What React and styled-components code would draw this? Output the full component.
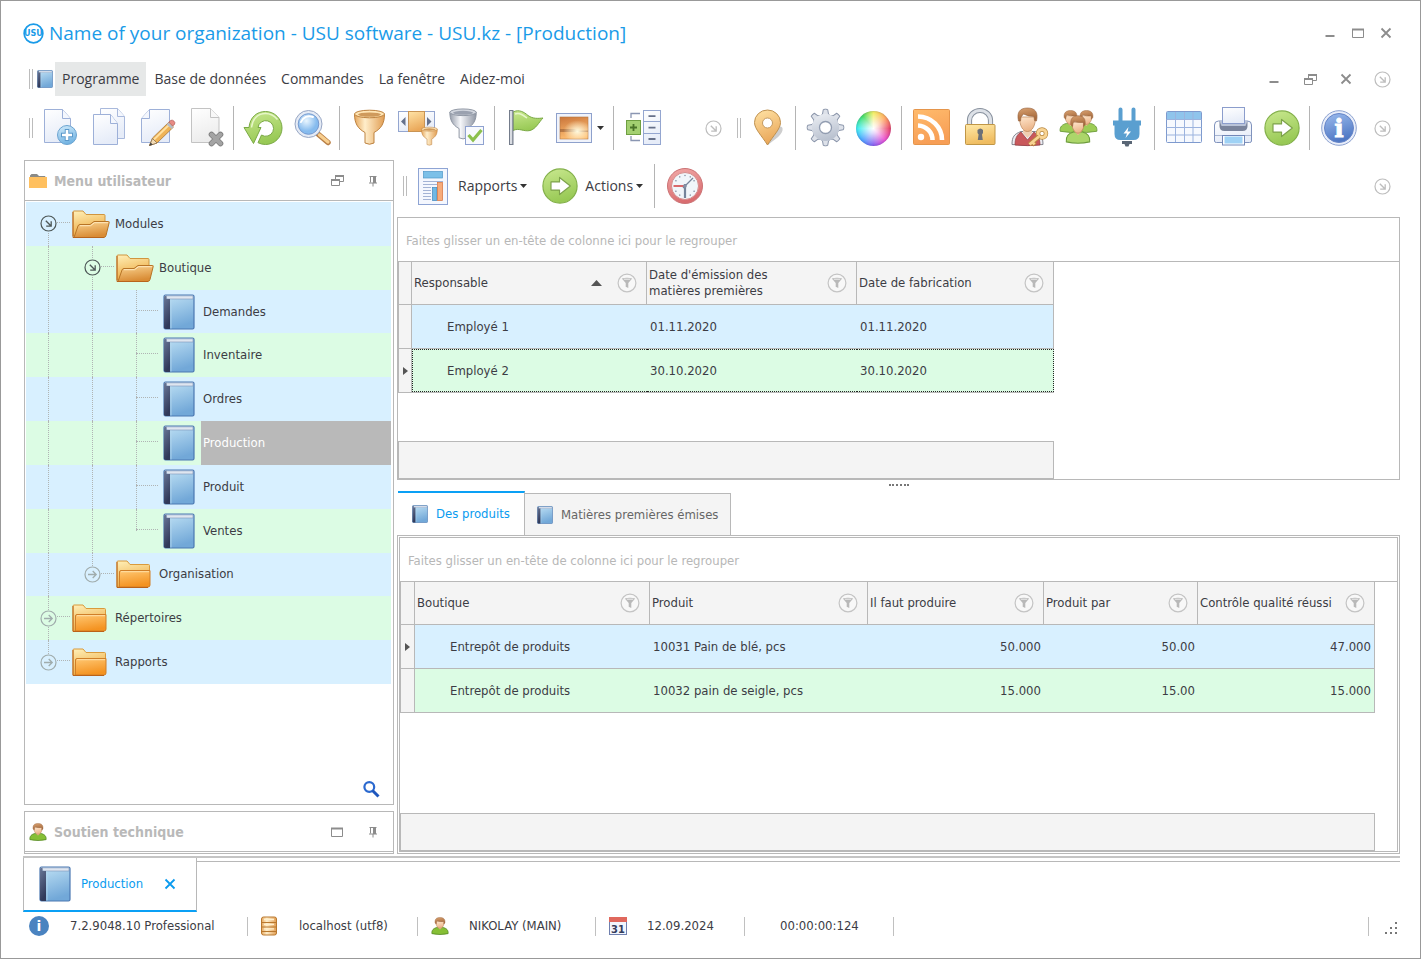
import React from "react";
import styled, { createGlobalStyle, css } from "styled-components";

const GlobalStyle = createGlobalStyle`
  * {
    box-sizing: border-box;
  }
  body {
    margin: 0;
    background: #fff;
    color: #3c3c44;
    font-family: "DejaVu Sans Condensed", "DejaVu Sans", sans-serif;
    font-size: 13px;
    line-height: 16px;
  }
  button {
    margin: 0;
    padding: 0;
    border: 0;
    background: none;
    color: inherit;
    font: inherit;
    cursor: pointer;
  }
  svg {
    display: block;
    flex-shrink: 0;
    overflow: visible;
  }
`;

const line = "#b8b8b8";
const blueRow = "#d8f0ff";
const greenRow = "#dcfce4";

/* ---------- window ---------- */

const Window = styled.div`
  display: flex;
  flex-direction: column;
  min-height: 100vh;
  padding: 13px 20px 18px 22px;
  border: 1px solid #999;
`;

const TitleBar = styled.header`
  display: flex;
  align-items: center;
  height: 38px;
  color: #1a9be8;
  h1 {
    flex: 1;
    margin: 0 0 0 5px;
    font-family: "Open Sans", "Noto Sans", sans-serif;
    font-size: 19px;
    font-weight: 400;
    line-height: 24px;
  }
`;

const WindowButton = styled.button`
  display: flex;
  align-items: center;
  justify-content: center;
  flex-shrink: 0;
  width: ${(props) => (props.$narrow ? "28px" : "36px")};
  height: 28px;
  color: #8c8c8c;
`;

const Overflow = styled(WindowButton)`
  color: #bdbdbd;
`;

const MenuBar = styled.nav`
  display: flex;
  align-items: center;
  height: 34px;
  margin-top: 10px;
  padding-left: 6px;
  font-family: "Open Sans", "Noto Sans", sans-serif;
  font-size: 14px;
  .book {
    margin: 0 2px 0 4px;
  }
`;

const MenuItem = styled.button`
  height: 34px;
  margin-right: 1px;
  padding: 0 7px;
  ${(props) =>
    props.$active &&
    css`
      background: #e6e8e8;
    `};
`;

const Spacer = styled.div`
  flex: 1;
  min-height: ${(props) => props.$min || "0"};
`;

const Grip = styled.span`
  flex-shrink: 0;
  width: 4px;
  height: 20px;
  border: 1px solid #bcbcbc;
  border-width: 0 1px;
`;

const ToolBar = styled.div`
  display: flex;
  align-items: center;
  height: 50px;
  margin-top: 7px;
  padding-left: 6px;
`;

const ToolGroup = styled.div`
  display: flex;
  align-items: center;
  flex: none;
  padding: 0 1px 0 ${(props) => (props.$lead ? "6px" : "1px")};
`;

const ToolButton = styled.button`
  display: flex;
  align-items: center;
  justify-content: center;
  flex-shrink: 0;
  width: 49px;
  height: 48px;
`;

const SplitButton = styled(ToolButton)`
  width: 62px;
  padding-left: 2px;
  gap: 5px;
`;

const Separator = styled.span`
  flex-shrink: 0;
  width: 1px;
  height: 44px;
  margin: 0 4px 0 3px;
  background: #b4b4b4;
`;

const ColorWheel = styled.span`
  width: 35px;
  height: 35px;
  border-radius: 50%;
  box-shadow: inset 0 0 2px rgba(60, 60, 120, 0.5);
  background: radial-gradient(circle, #fff 0, rgba(255, 255, 255, 0.75) 20%, rgba(255, 255, 255, 0) 66%),
    conic-gradient(#f2ee62, #ffa95c 45deg, #e8456a 90deg, #ea4fd0 135deg, #8a62f0 180deg, #49a0ff 225deg, #3eeef0 270deg, #45dd62 320deg, #f2ee62);
`;

/* ---------- side column ---------- */

const Main = styled.main`
  display: flex;
  flex: 1;
  gap: 3px;
  margin: 7px 0 2px 1px;
`;

const SideColumn = styled.aside`
  display: flex;
  flex-direction: column;
  flex: 0 0 370px;
  gap: 6px;
`;

const SidePanel = styled.section`
  display: flex;
  flex-direction: column;
  border: 1px solid ${line};
  flex: ${(props) => (props.$grow ? 1 : "none")};
  padding-bottom: ${(props) => (props.$grow ? "0" : "1px")};
`;

const SideHeader = styled.div`
  display: flex;
  align-items: center;
  height: 40px;
  padding: 0 2px 0 4px;
  border-bottom: 1px solid ${line};
  h2 {
    flex: 1;
    margin: 0 0 0 7px;
    color: #b9b9b9;
    font-size: 14px;
    line-height: 16px;
    font-weight: bold;
  }
`;

const Tree = styled.ul`
  display: grid;
  grid-auto-rows: 1fr;
  height: 482px;
  margin: 1px 2px 0 1px;
  padding: 0;
  list-style: none;
`;

const TreeRow = styled.li`
  display: flex;
  align-items: stretch;
  background: ${blueRow};
  &:nth-child(even) {
    background: ${greenRow};
  }
`;

const Guide = styled.span`
  position: relative;
  display: flex;
  align-items: center;
  justify-content: center;
  flex: 0 0 44px;
  background: inherit;
  &::before {
    content: "";
    position: absolute;
    left: 22px;
    top: ${(props) => (props.$from ? "50%" : "0")};
    bottom: ${(props) => (props.$to ? "50%" : "0")};
    border-left: 1px dotted #b0b4b4;
  }
  &::after {
    content: "";
    position: absolute;
    left: 22px;
    right: 0;
    top: 20px;
    border-top: ${(props) => (props.$branch ? "1px dotted #b0b4b4" : "0")};
  }
`;

const Toggle = styled.button`
  position: relative;
  z-index: 1;
  border-radius: 50%;
  background: inherit;
  color: ${(props) => (props.$open ? "#4d5757" : "#a0acac")};
`;

const TreeItem = styled.button`
  display: flex;
  flex: 1;
  text-align: left;
  .icon {
    display: flex;
    align-items: center;
    flex: 0 0 43px;
    align-self: stretch;
    padding-left: ${(props) => (props.$leaf ? "5px" : "2px")};
  }
  .label {
    display: flex;
    flex: 1;
    align-items: center;
    align-self: stretch;
    padding-left: 2px;
    ${(props) =>
      props.$selected &&
      css`
        background: #b9b9b9;
        color: #fff;
      `};
  }
`;

const SearchButton = styled.button`
  align-self: flex-end;
  padding: 7px 14px;
`;

/* ---------- content column ---------- */

const Content = styled.section`
  display: flex;
  flex-direction: column;
  flex: 1;
  min-width: 0;
`;

const ContentBar = styled.div`
  display: flex;
  align-items: center;
  height: 50px;
  margin: 1px 0 6px;
  padding-left: 6px;
  gap: 1px;
  font-family: "Open Sans", "Noto Sans", sans-serif;
  font-size: 14px;
`;

const LabelButton = styled.button`
  display: flex;
  align-items: center;
  height: 44px;
  padding: 0 7px;
  gap: 7px;
  .caret {
    margin-left: -4px;
  }
`;

const GridPanel = styled.div`
  display: flex;
  flex-direction: column;
  flex: ${(props) => (props.$grow ? 1 : "none")};
  border: 1px solid ${line};
`;

const GroupHint = styled.div`
  display: flex;
  align-items: center;
  height: 44px;
  padding: 2px 8px 0;
  border-bottom: 1px solid ${line};
  color: #b7b7b7;
`;

const Table = styled.table`
  width: ${(props) => props.$width}px;
  table-layout: fixed;
  border-spacing: 0;
  border: 1px solid ${line};
  border-width: 0 0 1px 1px;
  th,
  td {
    border-right: 1px solid ${line};
    border-bottom: 1px solid ${line};
    text-align: left;
    font-weight: 400;
  }
  th {
    height: 43px;
    padding: 0 9px 0 2px;
    background: #f4f4f4;
  }
  td {
    height: 44px;
    padding: 0 3px;
    border-right: 0;
    background: ${blueRow};
  }
  td:last-child {
    border-right: 1px solid ${line};
  }
  tbody tr:last-child td {
    border-bottom: 0;
    height: 43px;
  }
  tr:nth-child(even) td {
    background: ${greenRow};
  }
  td:nth-child(2) {
    padding-left: 35px;
  }
`;

const Row = styled.tr`
  ${(props) =>
    props.$focused &&
    css`
      && td:not(:first-child) {
        border-top: 1px dotted #222;
        border-bottom: 1px dotted #222;
      }
      && td:nth-child(2) {
        padding-left: 34px;
        border-left: 1px dotted #222;
      }
      && td:last-child {
        border-right: 1px dotted #222;
      }
    `};
`;

const Indicator = styled.td`
  && {
    padding: 0 0 0 4px;
    border-right: 1px solid ${line};
    background: #f4f4f4 !important;
  }
`;

const Value = styled.td`
  && {
    text-align: ${(props) => (props.$right ? "right" : "left")};
  }
`;

const HeadCell = styled.div`
  display: flex;
  align-items: center;
  gap: 12px;
  span {
    flex: 1;
  }
  .sort {
    margin-right: 3px;
  }
`;

const FooterBand = styled.div`
  width: ${(props) => props.$width}px;
  height: 38px;
  border: 1px solid ${line};
  background: #f4f4f4;
`;

const Splitter = styled.div`
  display: flex;
  justify-content: center;
  height: 11px;
  padding-top: 4px;
  span {
    width: 20px;
    border-top: 2px dotted #777;
    height: 2px;
  }
`;

const Tabs = styled.div`
  display: flex;
  align-items: flex-end;
  padding-left: 1px;
`;

const Tab = styled.button`
  display: flex;
  align-items: center;
  gap: 8px;
  height: 42px;
  padding: 0 12px;
  border: 1px solid ${line};
  border-width: 1px 1px 0 0;
  background: #f4f4f4;
  color: #666;
  ${(props) =>
    props.$active &&
    css`
      height: 44px;
      padding: 0 14px;
      border-width: 2px 1px 0 0;
      border-top-color: #0aa0f5;
      background: #fff;
      color: #0a9bef;
    `};
`;

const TabPage = styled.div`
  display: flex;
  flex: 1;
  padding: 1px;
  border: 1px solid ${line};
`;

/* ---------- bottom ---------- */

const DocumentStrip = styled.div`
  display: flex;
  align-items: flex-start;
  border-top: 2px solid #c4c4c4;
  &::after {
    content: "";
    flex: 1;
    height: 3px;
    border-bottom: 1px solid ${line};
  }
`;

const DocumentTab = styled.div`
  display: flex;
  align-items: center;
  height: 54px;
  padding: 0 20px 0 15px;
  border: 1px solid ${line};
  border-width: 0 1px 2px;
  border-bottom-color: #0aa0f5;
  color: #0a9bef;
  .name {
    width: 83px;
    margin-left: 10px;
    text-align: left;
  }
`;

const StatusBar = styled.footer`
  display: grid;
  grid-template-columns: 225px 170px 178px 149px 149px 1fr auto;
  align-items: center;
  height: 28px;
`;

const StatusItem = styled.div`
  display: flex;
  align-items: center;
  height: 19px;
  padding-left: ${(props) => (props.$plain ? "35px" : props.$first ? "6px" : "13px")};
  border-right: 1px solid #c0c0c0;
  .icon {
    flex: 0 0 ${(props) => (props.$first ? "41px" : "38px")};
  }
`;

const SizeGrip = styled.span`
  margin: 4px 2px 0 14px;
`;

/* ---------- drawings ---------- */

const gradients = [
  ["gPage", "#ffffff", "#e6ecf8"],
  ["gGrey", "#ffffff", "#ececec"],
  ["gBlue", "#d3ecfb", "#74b4e2"],
  ["gBook", "#c0e2f5", "#72a8d8"],
  ["gSpine", "#6a7898", "#30395a"],
  ["gGreen", "#c9e88f", "#98c955"],
  ["gOrange", "#ffe3a6", "#eaa85a"],
  ["gFront", "#ffc873", "#f49321"],
  ["gOpen", "#fbd693", "#d98c35"],
  ["gBack", "#fff0b8", "#eda940"],
  ["gGear", "#eceff4", "#bac2d0"],
  ["gRss", "#ffbb6c", "#f79e56"],
  ["gLock", "#ffe9a8", "#efbc60"],
  ["gHair", "#d9a272", "#a5683a"],
  ["gSkin", "#ffe6cc", "#eab387"],
  ["gRed", "#f2aaa8", "#d96d70"],
  ["gInfo", "#9bbbed", "#5078c4"],
  ["gSun", "#c9743a", "#ffbf72"],
];

const DefsSvg = styled.svg`
  position: absolute;
`;

const Defs = () => (
  <DefsSvg width="0" height="0" aria-hidden="true">
    <defs>
      {gradients.map(([id, a, b]) => (
        <linearGradient key={id} id={id} x1="0" y1="0" x2="0.3" y2="1">
          <stop offset="0" stopColor={a} />
          <stop offset="1" stopColor={b} />
        </linearGradient>
      ))}
      <linearGradient id="gFunnel" x1="0" x2="1">
        <stop offset="0" stopColor="#e6a75d" />
        <stop offset="0.35" stopColor="#ffeecb" />
        <stop offset="1" stopColor="#e19d52" />
      </linearGradient>
      <linearGradient id="gMetal" x1="0" x2="1">
        <stop offset="0" stopColor="#979eab" />
        <stop offset="0.4" stopColor="#f6f7fa" />
        <stop offset="1" stopColor="#8f96a4" />
      </linearGradient>
      <radialGradient id="gLens" cx="0.4" cy="0.35">
        <stop offset="0" stopColor="#eaf6ff" />
        <stop offset="1" stopColor="#86bbee" />
      </radialGradient>
      <radialGradient id="gGlow" cx="0.62" cy="0.65" r="0.5">
        <stop offset="0" stopColor="#fffbe0" />
        <stop offset="1" stopColor="#fffbe0" stopOpacity="0" />
      </radialGradient>
    </defs>
  </DefsSvg>
);

const Icon = ({ size = 40, box = 40, h, children }) => (
  <svg width={size} height={h || size} viewBox={`0 0 ${box} ${h ? (box * h) / size : box}`} fill="none" aria-hidden="true">
    {children}
  </svg>
);

const Book = ({ w = 32 }) => (
  <svg className="book" width={w} height={(w * 36) / 32} viewBox="0 0 32 36" fill="none" aria-hidden="true">
    <rect x="1" y="1" width="30" height="34" rx="1.5" fill="url(#gBook)" stroke="#4b78b2" strokeWidth="1.2" />
    <path d="M2 1.800h28v3.200H4z" fill="#dfe6f0" stroke="#7c93b8" strokeWidth=".6" />
    <path d="M1 2.500 3.500 1.500V5H7v30H2.500L1 34z" fill="url(#gSpine)" />
    <path d="M8 5.500v29" stroke="#b5d8ee" strokeWidth=".8" />
  </svg>
);

const FolderOpen = () => (
  <Icon size={38} box={38} h={28}>
    <path d="M1 26V2q0-1 1-1h9l3 3.500h18q1 0 1 1V24z" fill="url(#gBack)" stroke="#d0953f" />
    <path d="M2 27.500 6 16q.5-1.500 2-1.500h10l4-3h14.500q1 0 .7 1L34 25.500q-.5 2-2.500 2z" fill="url(#gOpen)" stroke="#b87425" />
    <path d="M8 15.700h10.500l4-3H36" stroke="#ffe9bf" />
    <path d="M1 2v25.500h31" stroke="#b8641c" />
  </Icon>
);

const FolderClosed = () => (
  <Icon size={38} box={38} h={28}>
    <path d="M1 27V2q0-1 1-1h9l3 3.500h18.500q1 0 1 1V26z" fill="url(#gBack)" stroke="#d99a3c" />
    <path d="M3.500 27V12q0-1.500 1.500-1.500h29v14.500q0 2-2 2z" fill="url(#gFront)" stroke="#d07f28" />
    <path d="M1 2v25.500h31" stroke="#bb6218" />
    <path d="M5 11.700h28" stroke="#ffe0a8" />
  </Icon>
);

const Caret = () => (
  <svg className="caret" width="7" height="4" viewBox="0 0 7 4" aria-hidden="true">
    <path d="M0 0h7L3.500 4z" fill="#333" />
  </svg>
);

const ArrowCircle = ({ right }) => (
  <Icon size={17} box={17}>
    <circle cx="8.500" cy="8.500" r="7.500" stroke="currentColor" strokeWidth="1.200" />
    {right ? (
      <path d="M4 8.500h8M8.700 5l3.500 3.500L8.700 12" stroke="currentColor" strokeWidth="1.300" />
    ) : (
      <path d="M5.800 5.800l5 5M11.200 6.200v5h-5" stroke="currentColor" strokeWidth="1.300" />
    )}
  </Icon>
);

const Minimize = () => (
  <Icon size={12} box={12}>
    <path d="M1.500 9h9" stroke="currentColor" strokeWidth="2" />
  </Icon>
);

const Maximize = () => (
  <Icon size={12} box={12}>
    <path d="M.5 2.500h11v8H.5z" stroke="currentColor" />
    <path d="M0 2.500h12" stroke="currentColor" strokeWidth="2" />
  </Icon>
);

const Restore = () => (
  <Icon size={13} box={13}>
    <path d="M.5 5.500h8v6h-8zM4.500 5V1.500h8v6H9" stroke="currentColor" />
    <path d="M0 6h9M4 2h9" stroke="currentColor" strokeWidth="2" />
  </Icon>
);

const Close = () => (
  <Icon size={12} box={12}>
    <path d="M1.500 1.500l9 9M10.500 1.500l-9 9" stroke="currentColor" strokeWidth="1.800" />
  </Icon>
);

const Pin = () => (
  <Icon size={12} box={12}>
    <path d="M2.500 1.500h7M3.500 1v6.500M2 8h8M6 8v3.500" stroke="currentColor" />
    <path d="M6 1.500h3V8H6z" fill="currentColor" />
  </Icon>
);

const FilterIcon = () => (
  <Icon size={20} box={20}>
    <circle cx="10" cy="10" r="8.900" fill="#f8f8f8" stroke="#c4c4c4" strokeWidth="1.200" />
    <path d="M4.800 5.500q5.200-1.500 10.400 0L11.300 10v5l-2.600-1.200V10z" fill="#b9b9b9" />
    <path d="M6.800 6.200h6.400" stroke="#f0f0f0" />
  </Icon>
);

const Logo = () => (
  <Icon size={21} box={21}>
    <circle cx="10.500" cy="10.500" r="9.300" stroke="#1a9be8" strokeWidth="1.800" />
    <text x="10.500" y="13.200" textAnchor="middle" fontFamily="DejaVu Sans" fontWeight="bold" fontSize="8" fill="#1a9be8">
      USU
    </text>
  </Icon>
);

const PageNew = () => (
  <Icon>
    <path d="M5.500 1.500h18l8 9v24h-26z" fill="url(#gPage)" stroke="#9db0d8" />
    <path d="M23.500 1.500v9h8" fill="#f4f7fd" stroke="#9db0d8" />
    <circle cx="28" cy="27" r="9.500" fill="url(#gBlue)" stroke="#6ba4d1" />
    <path d="M28 21v12M22 27h12" stroke="#5a98cb" strokeWidth="4.400" />
    <path d="M28 22v10M23 27h10" stroke="#fff" strokeWidth="2.600" />
  </Icon>
);

const PageCopy = () => (
  <Icon>
    <path d="M12.500.5h17l7 8v22h-24z" fill="url(#gPage)" stroke="#a9b9dc" />
    <path d="M29.500.5v8h7" fill="#f4f7fd" stroke="#a9b9dc" />
    <path d="M5.500 6.500h17l7 9v21h-24z" fill="url(#gPage)" stroke="#9db0d8" />
    <path d="M22.500 6.500v9h7" fill="#f4f7fd" stroke="#9db0d8" />
  </Icon>
);

const PageEdit = () => (
  <Icon>
    <path d="M12.500 1.500h20v33h-28v-24z" fill="url(#gPage)" stroke="#9db0d8" />
    <path d="M12.500 1.500v9h-8" fill="#f4f7fd" stroke="#9db0d8" />
    <path d="M12.500 37.500l3-7.500L31.500 14.500l5 4.500L20 35z" fill="#efb356" stroke="#a87738" strokeWidth=".8" />
    <path d="M17 31.500L33 16" stroke="#ffe0a0" strokeWidth="1.800" />
    <path d="M12.500 37.500l3-7 4.500 4.500z" fill="#f4dcb6" stroke="#8b7450" strokeWidth=".8" />
    <path d="M12.300 37.800l1.300-3.300 2.200 2z" fill="#444" />
    <path d="M30.500 15.500l5 4.500" stroke="#b6bcc8" strokeWidth="2.500" />
    <path d="M31.800 14l2-1.600q1.500-.8 3.200.8 1.500 1.500.5 3L35.800 18z" fill="#e88b84" stroke="#b7625e" strokeWidth=".8" />
  </Icon>
);

const PageDelete = () => (
  <Icon>
    <path d="M5.500.5h19l8.500 9v25H5.500z" fill="url(#gGrey)" stroke="#c3c3c3" />
    <path d="M24.500.5v9H33" fill="#f8f8f8" stroke="#c3c3c3" />
    <path d="M25.500 26.500l9 9M34.500 26.500l-9 9" stroke="#7d7d7d" strokeWidth="5.600" strokeLinecap="round" />
    <path d="M25.500 26.500l9 9M34.500 26.500l-9 9" stroke="#a4a4a4" strokeWidth="4" strokeLinecap="round" />
  </Icon>
);

const Refresh = () => (
  <Icon>
    <path
      d="M6 19.500C7 9 14 3.500 22.500 3.500a16.500 16.500 0 0 1 0 33q-4 0-7.500-1.800l3.500-7.700a7.800 7.800 0 1 0-3.500-7.500H18L10.500 35.500 1 19.500z"
      fill="url(#gGreen)"
      stroke="#7aa945"
    />
    <path d="M8.500 19.500C9.500 10 15.500 5.500 22.500 5.500q7 0 12 6" stroke="#e6f6c8" strokeWidth="1.500" />
  </Icon>
);

const Magnifier = () => (
  <Icon>
    <path d="M26 26l10 8.500" stroke="#b97f45" strokeWidth="5.500" strokeLinecap="round" />
    <path d="M27.500 27l8.500 7" stroke="#f8cf8f" strokeWidth="3.200" strokeLinecap="round" />
    <circle cx="16.500" cy="16" r="13.500" fill="#e5ebf5" stroke="#97a6c4" />
    <circle cx="16.500" cy="16" r="10.300" fill="url(#gLens)" stroke="#7599cf" />
    <path d="M9 14c2-5 7-7 12-5" stroke="#fff" strokeWidth="2" strokeLinecap="round" />
  </Icon>
);

const FunnelShape = ({ metal }) => {
  const stroke = metal ? "#868e9c" : "#bd8240";
  return (
    <>
      <path
        d="M5.500 6c0 9 3 14.500 10.500 18.500V35q4.500 2.500 9 0V24.500C32.500 20.500 35.500 15 35.500 6z"
        fill={metal ? "url(#gMetal)" : "url(#gFunnel)"}
        stroke={stroke}
      />
      <ellipse cx="20.500" cy="6" rx="15" ry="3.800" fill={metal ? "#d3d7df" : "#ffe5b4"} stroke={stroke} />
      <ellipse cx="20.500" cy="6.600" rx="11.500" ry="2.200" fill={metal ? "#9aa1af" : "#cf9a5c"} />
    </>
  );
};

const Funnel = () => (
  <Icon>
    <FunnelShape />
  </Icon>
);

const ColumnFilter = () => (
  <Icon>
    <rect x="0.500" y="3.500" width="36" height="20" fill="url(#gPage)" stroke="#94a6d0" />
    <rect x="10.500" y="3.500" width="16" height="20" fill="url(#gOrange)" stroke="#c99454" />
    <path d="M7.500 9v9L3 13.500zM29 9v9l4.500-4.500z" fill="#65718c" />
    <g transform="translate(20.500 18) scale(.53)">
      <FunnelShape />
    </g>
  </Icon>
);

const FunnelCheck = () => (
  <Icon>
    <g transform="translate(-2 -1) scale(.88)">
      <FunnelShape metal />
    </g>
    <rect x="18.500" y="18.500" width="18" height="18" fill="#f7f9fe" stroke="#8fa2d0" />
    <path d="M21.500 27l4.500 5 8.500-10" stroke="#8cc04e" strokeWidth="3.200" />
  </Icon>
);

const Flag = () => (
  <Icon>
    <path d="M9 4c6-3 11 0 15 3.500 5 3.500 10 3 15 2.500-4 4-7 11-13 12.500-6 1.500-11-3-17 0z" fill="url(#gGreen)" stroke="#7aa945" />
    <path d="M11 6c5-1.500 8 1 12 4" stroke="#e6f6c8" strokeWidth="1.500" />
    <rect x="5.500" y="2.500" width="3.500" height="34" fill="url(#gMetal)" stroke="#747c8b" />
  </Icon>
);

const Picture = () => (
  <Icon size={36} box={36} h={32}>
    <rect x="0.500" y="1.500" width="35" height="29" fill="#f0f3fb" stroke="#8ea1cc" />
    <rect x="4" y="5" width="28" height="22" fill="url(#gSun)" stroke="#b47a44" strokeWidth=".6" />
    <path d="M4 17h14l5 1.500h9V20H4z" fill="#8c562f" opacity=".55" />
    <rect x="4" y="5" width="28" height="22" fill="url(#gGlow)" />
  </Icon>
);

const TreeList = () => (
  <Icon>
    <path d="M8 10V5.500h9M8 28v4.500h9" stroke="#8a96b2" strokeWidth="1.300" />
    <rect x="3.500" y="12.500" width="14" height="14" fill="#a3d071" stroke="#6f9f42" />
    <path d="M10.500 16v7M7 19.500h7" stroke="#4a7429" strokeWidth="1.800" />
    <rect x="20.500" y="2.500" width="17" height="34" fill="url(#gPage)" stroke="#94a6d0" />
    <path d="M20.500 13.500h17M20.500 25.500h17" stroke="#94a6d0" />
    <path d="M25.500 8.200h7M25.500 19.700h7M25.500 31h7" stroke="#667089" strokeWidth="1.800" />
  </Icon>
);

const MapPin = () => (
  <Icon>
    <path d="M20 37c6-5 16-11 14.500-17-2-3-6-1-8 2z" fill="#c2c2c2" opacity=".8" />
    <path d="M19.500 37C14 28 6.500 21 6.500 14.500a13 12.500 0 0 1 26 0C32.500 21 25 28 19.500 37z" fill="url(#gOrange)" stroke="#bf914f" />
    <circle cx="19.500" cy="15" r="5" fill="#fff" stroke="#c39a62" />
  </Icon>
);

const turns = [0, 45, 90, 135, 180, 225, 270, 315];

const Gear = () => (
  <Icon>
    {turns.map((a) => (
      <path
        key={a}
        d="M15 8.500l2.500-2.500.8-4.500q2.200-.6 4.400 0l.8 4.500L26 8.500z"
        transform={`rotate(${a} 20.500 19.500)`}
        fill="#dde1e9"
        stroke="#8a95aa"
        strokeLinejoin="round"
      />
    ))}
    <circle cx="20.500" cy="19.500" r="13.600" fill="url(#gGear)" />
    <circle cx="20.500" cy="19.500" r="6" fill="#fff" stroke="#929db1" strokeWidth="1.300" />
  </Icon>
);

const Rss = () => (
  <Icon>
    <rect x="2.500" y="1.500" width="36" height="35" rx="1" fill="url(#gRss)" stroke="#e5954b" />
    <circle cx="10" cy="29" r="3.200" fill="#fff" />
    <path d="M7 17.500a15 14.500 0 0 1 14.500 14.500M7 8.500a24 23.500 0 0 1 24 23.500" stroke="#fff" strokeWidth="4.600" />
  </Icon>
);

const Lock = () => (
  <Icon>
    <path d="M9.500 17v-4.500a10.500 10 0 0 1 21 0V17" stroke="#87909d" strokeWidth="5.200" />
    <path d="M9.500 17v-4.500a10.500 10 0 0 1 21 0V17" stroke="#dde1e7" strokeWidth="3.200" />
    <rect x="5.500" y="16.500" width="29.500" height="20" rx="1" fill="url(#gLock)" stroke="#c09646" />
    <path d="M17.500 22q3-3 5.500 0v3l-1 1.500.8 5.500h-5l.8-5.500-1.100-1.500z" fill="#6b7078" />
  </Icon>
);

const Bust = ({ shirt = "#9dcc55", edge = "#6d9c3c" }) => (
  <>
    <path d="M1 18.500c-.5-4 2-6 5.500-6.800h7C17 12.500 19.500 14.500 19 18.500q-9 2-18 0z" fill={shirt} stroke={edge} strokeWidth=".8" />
    <path d="M7 11l3 3 3-3V9H7z" fill="#e9b88f" />
    <path d="M5.200 5c0 4 2 7.500 4.800 7.500S14.800 9 14.800 5z" fill="url(#gSkin)" stroke="#b98254" strokeWidth=".5" />
    <path d="M4.500 6.500C4 2.500 6 .5 10 .5s6 2 5.500 6l-1.300 1.500V5Q10 5.500 6.500 4.200L5.800 8z" fill="url(#gHair)" stroke="#95603a" strokeWidth=".4" />
  </>
);

const UserKey = () => (
  <Icon>
    <path d="M3 36.500C3 29 5 26 12 23.500h14c6 2 8 6 8 13q-15.500 2-31 0z" fill="#ececf2" stroke="#85868f" />
    <path d="M6 37C6 31 7.500 27 12 24l6.500 8 6.500-8c4 3 6 7 6 13q-12.500 1.300-25 0z" fill="#c9585b" stroke="#963c40" strokeWidth=".7" />
    <path d="M14 22h9v3l-4.500 5L14 25z" fill="#f0cdb0" />
    <path d="M10.500 9c0 8 3 14.500 8 14.500S26.500 17 26.500 9z" fill="url(#gSkin)" stroke="#b98254" strokeWidth=".7" />
    <path d="M9.500 13C7.500 4 11 0 18.500 0s11 4 9 13l-2-.5-.5-4Q19 8.500 14.500 6L12 9l-.5 4z" fill="url(#gHair)" stroke="#95603a" strokeWidth=".6" />
    <circle cx="33" cy="25.500" r="4" stroke="#b9883f" strokeWidth="4.400" />
    <circle cx="33" cy="25.500" r="4" stroke="#f8d494" strokeWidth="3" />
    <path d="M30 28.500l-9.500 8M23.500 34l2.500 3" stroke="#b9883f" strokeWidth="4.400" />
    <path d="M30 28.500l-9.500 8M23.500 34l2 2.500" stroke="#f8d494" strokeWidth="2.800" />
  </Icon>
);

const Users = () => (
  <Icon>
    <g transform="translate(1 2) scale(1.15)">
      <Bust />
    </g>
    <g transform="translate(17 2) scale(1.15)">
      <Bust />
    </g>
    <g transform="translate(7 7) scale(1.300 1.450)">
      <Bust shirt="#acd66a" />
    </g>
  </Icon>
);

const Plug = () => (
  <Icon>
    <path d="M13.500 1.500v12M26.500 1.500v12" stroke="#5a9fd0" strokeWidth="4" strokeLinecap="round" />
    <path d="M6 12.500h28v5h-1.500V26q0 6-6 6h-13q-6 0-6-6v-8.500H6z" fill="#5a9fd0" />
    <path d="M21.500 19l-5 6.500h3.500L18.500 30l5.500-6.500h-3.500z" fill="#fff" />
    <path d="M15 33h10v3h-2.500l-1 2.500h-3l-1-2.500H15z" fill="#596675" />
  </Icon>
);

const TableIcon = () => (
  <Icon>
    <rect x="2.500" y="3.500" width="35" height="31" rx="1" fill="#f6f9fe" stroke="#7e9ace" />
    <rect x="3" y="4" width="34" height="7.500" fill="#8fc4ec" />
    <path d="M2.500 11.500h35M2.500 19.500h35M2.500 27h35M11.500 4v30M20.500 4v30M29 4v30" stroke="#9bb3de" />
  </Icon>
);

const Printer = () => (
  <Icon>
    <path d="M1.500 33V17q0-4 4-4h29q4 0 4 4v16q0 1.500-2 1.500h-33q-2 0-2-1.500z" fill="url(#gPage)" stroke="#8093bd" />
    <path d="M6.500 13h28v5q0 5-5 5h-18q-5 0-5-5z" fill="#7a849c" />
    <path d="M6.500 13h28l-2 5h-24z" fill="#b9c3d8" />
    <rect x="9.500" y="-.5" width="22" height="16" fill="url(#gPage)" stroke="#8b9dcc" />
    <path d="M2 27.500h36" stroke="#a9b6d2" />
    <rect x="9.500" y="27.500" width="22" height="9.500" fill="#fff" stroke="#7388b8" />
    <rect x="11.500" y="28.500" width="18" height="7" fill="#9fd2f5" />
  </Icon>
);

const GoIcon = () => (
  <Icon size={36} box={40}>
    <circle cx="20" cy="20" r="19" fill="url(#gGreen)" stroke="#83b04a" strokeWidth="1.300" />
    <path d="M10 15.500h9.500V10.500L31.500 20l-12 9.500v-5H10z" fill="#fff" stroke="#7da24b" strokeWidth="1.300" strokeLinejoin="round" />
  </Icon>
);

const InfoIcon = () => (
  <Icon size={36} box={36}>
    <circle cx="18" cy="18" r="17.300" fill="#e9eefa" stroke="#8ba1d0" />
    <circle cx="18" cy="18" r="14.500" fill="url(#gInfo)" stroke="#6685c7" />
    <text x="18" y="27" textAnchor="middle" fontFamily="DejaVu Serif" fontWeight="bold" fontSize="25" fill="#fff" stroke="#fff" strokeWidth=".8">
      i
    </text>
  </Icon>
);

const ReportIcon = () => (
  <Icon size={36} box={36} h={38}>
    <g transform="translate(3)">
      <rect x="0.500" y="1.500" width="29" height="36" fill="#f4f7fe" stroke="#8ea4d4" />
      <rect x="5.500" y="4.500" width="19" height="6.500" fill="#7cc0e8" stroke="#4d97c8" strokeWidth=".7" />
      <path d="M5 14.500h20M5 17.500h14M5 20.500h8M5 23.500h8M5 26.500h8M5 29.500h8M5 32.500h8" stroke="#a3b3d5" strokeWidth="1.200" />
      <rect x="14.500" y="20.500" width="4.500" height="13" fill="#6fb8e4" stroke="#4086bb" strokeWidth=".7" />
      <rect x="19.500" y="15.500" width="5" height="18" fill="#f6ab7b" stroke="#d9713a" strokeWidth=".7" />
    </g>
  </Icon>
);

const ClockIcon = () => (
  <Icon size={38} box={38}>
    <circle cx="19" cy="19" r="17.500" fill="url(#gRed)" stroke="#cb7375" />
    <circle cx="19" cy="19" r="13.500" fill="#f1f6fa" stroke="#d58c8b" />
    {[0, 30, 60, 120, 150, 210, 240, 300, 330].map((a) => (
      <circle key={a} cx="19" cy="8.500" r=".8" fill="#8b97a8" transform={`rotate(${a} 19 19)`} />
    ))}
    <path d="M19 19H7.500" stroke="#d8696b" strokeWidth="2" />
    <path d="M19 17v14" stroke="#75849a" strokeWidth="2.200" />
    <path d="M17 21l10-10" stroke="#75849a" strokeWidth="1.300" />
    <circle cx="19" cy="19" r="1.800" fill="#8591a5" />
  </Icon>
);

const SmallFolder = () => (
  <Icon size={18} box={18} h={14}>
    <path d="M1 4V1.500L2.500 0H8l2 2h6l1 2z" fill="#8a8a86" />
    <path d="M0 3h18v11H0z" fill="#ffc05f" />
  </Icon>
);

const UserIcon = () => (
  <Icon size={18} box={20}>
    <Bust shirt="#86bf35" edge="#4e8220" />
  </Icon>
);

const SearchIcon = () => (
  <Icon size={16} box={16}>
    <circle cx="6.300" cy="6" r="4.900" stroke="#2b69cf" strokeWidth="2.200" />
    <path d="M9.500 9.500l6 6" stroke="#1f57bd" strokeWidth="3" />
  </Icon>
);

const StatusInfo = () => (
  <Icon size={20} box={20}>
    <circle cx="10" cy="10" r="10" fill="#4a83c0" />
    <text x="10" y="15" textAnchor="middle" fontFamily="DejaVu Sans" fontWeight="bold" fontSize="14" fill="#fff">
      i
    </text>
  </Icon>
);

const Database = () => (
  <Icon size={16} box={16} h={20}>
    <path d="M.5 3q0-2 2-2h11q2 0 2 2v14q0 2-2 2h-11q-2 0-2-2z" fill="url(#gFunnel)" stroke="#b9782e" />
    <path d="M1 6.500h14M1 11h14M1 15.500h14" stroke="#b9782e" />
    <path d="M3 3.500h10M3 8.300h10M3 12.800h10" stroke="#fff0cd" strokeWidth="1.300" />
  </Icon>
);

const Calendar = () => (
  <Icon size={18} box={18}>
    <rect x="0.500" y="0.500" width="17" height="17" fill="#f2f5fc" stroke="#6f7fae" />
    <path d="M0 0h18v5H0z" fill="#e0685d" />
    <text x="9" y="15.500" textAnchor="middle" fontFamily="DejaVu Sans Condensed" fontWeight="bold" fontSize="11" fill="#353d5c">
      31
    </text>
  </Icon>
);

/* ---------- data ---------- */

const menus = ["Programme", "Base de données", "Commandes", "La fenêtre", "Aidez-moi"];

const tree = [
  { name: "Modules", guides: ["open-first"] },
  { name: "Boutique", guides: ["line", "open"] },
  { name: "Demandes", guides: ["line", "line", "branch"] },
  { name: "Inventaire", guides: ["line", "line", "branch"] },
  { name: "Ordres", guides: ["line", "line", "branch"] },
  { name: "Production", guides: ["line", "line", "branch"], selected: true },
  { name: "Produit", guides: ["line", "line", "branch"] },
  { name: "Ventes", guides: ["line", "line", "branch-last"] },
  { name: "Organisation", guides: ["line", "closed-last"] },
  { name: "Répertoires", guides: ["closed"] },
  { name: "Rapports", guides: ["closed-last"] },
];

const orders = {
  width: 656,
  indicator: 13,
  columns: [
    { title: "Responsable", width: 235, sorted: true },
    { title: "Date d'émission des matières premières", width: 210 },
    { title: "Date de fabrication", width: 197 },
  ],
  rows: [
    ["Employé 1", "01.11.2020", "01.11.2020"],
    ["Employé 2", "30.10.2020", "30.10.2020"],
  ],
  current: 1,
  focus: true,
};

const products = {
  width: 975,
  indicator: 14,
  columns: [
    { title: "Boutique", width: 235 },
    { title: "Produit", width: 218 },
    { title: "Il faut produire", width: 176, right: true },
    { title: "Produit par", width: 154, right: true },
    { title: "Contrôle qualité réussi", width: 177, right: true },
  ],
  rows: [
    ["Entrepôt de produits", "10031 Pain de blé, pcs", "50.000", "50.00", "47.000"],
    ["Entrepôt de produits", "10032 pain de seigle, pcs", "15.000", "15.00", "15.000"],
  ],
  current: 0,
};

const leftTools = [
  ["Ajouter", PageNew],
  ["Copier", PageCopy],
  ["Modifier", PageEdit],
  ["Supprimer", PageDelete],
  ["|"],
  ["Actualiser", Refresh],
  ["Rechercher", Magnifier],
  ["|"],
  ["Filtrer", Funnel],
  ["Filtrer la colonne", ColumnFilter],
  ["Filtre actif", FunnelCheck],
  ["|"],
  ["Marquer", Flag],
];

const rightTools = [
  ["Carte", MapPin],
  ["|"],
  ["Paramètres", Gear],
  ["Couleurs", ColorWheel],
  ["|"],
  ["Flux", Rss],
  ["Verrouiller", Lock],
  ["Droits", UserKey],
  ["Utilisateurs", Users],
  ["Connexion", Plug],
  ["|"],
  ["Tableau", TableIcon],
  ["Imprimer", Printer],
  ["Exécuter", GoIcon],
  ["|"],
  ["Informations", InfoIcon],
];

const Tools = ({ items }) =>
  items.map(([label, Drawing], i) =>
    label === "|" ? (
      <Separator key={i} />
    ) : (
      <ToolButton key={i} aria-label={label}>
        <Drawing />
      </ToolButton>
    )
  );

const OverflowButton = () => (
  <Overflow aria-label="Plus">
    <ArrowCircle />
  </Overflow>
);

const TreeView = () => (
  <Tree>
    {tree.map((node) => {
      const leaf = node.guides.length === 3;
      const isOpen = node.guides.some((g) => g.startsWith("open"));
      return (
        <TreeRow key={node.name}>
          {node.guides.map((g, i) => (
            <Guide key={i} $branch={g !== "line"} $from={g.endsWith("first")} $to={g.endsWith("last")}>
              {/^(open|closed)/.test(g) && (
                <Toggle $open={isOpen} aria-label={node.name} aria-expanded={isOpen}>
                  <ArrowCircle right={!isOpen} />
                </Toggle>
              )}
            </Guide>
          ))}
          <TreeItem $leaf={leaf} $selected={node.selected}>
            <span className="icon">{leaf ? <Book /> : isOpen ? <FolderOpen /> : <FolderClosed />}</span>
            <span className="label">{node.name}</span>
          </TreeItem>
        </TreeRow>
      );
    })}
  </Tree>
);

const DataGrid = ({ data }) => (
  <>
    <GroupHint>Faites glisser un en-tête de colonne ici pour le regrouper</GroupHint>
    <Table $width={data.width}>
      <colgroup>
        <col width={data.indicator} />
        {data.columns.map((c) => (
          <col key={c.title} width={c.width} />
        ))}
      </colgroup>
      <thead>
        <tr>
          <th />
          {data.columns.map((c) => (
            <th key={c.title} scope="col">
              <HeadCell>
                <span>{c.title}</span>
                {c.sorted && (
                  <svg className="sort" width="11" height="6" viewBox="0 0 11 6" aria-hidden="true">
                    <path d="M0 6h11L5.500 0z" fill="#555" />
                  </svg>
                )}
                <button aria-label={"Filtrer " + c.title}>
                  <FilterIcon />
                </button>
              </HeadCell>
            </th>
          ))}
        </tr>
      </thead>
      <tbody>
        {data.rows.map((row, r) => (
          <Row key={r} $focused={data.focus && r === data.current}>
            <Indicator>
              {r === data.current && (
                <svg width="5" height="8" viewBox="0 0 5 8" aria-hidden="true">
                  <path d="M0 0v8l5-4z" fill="#555" />
                </svg>
              )}
            </Indicator>
            {row.map((v, i) => (
              <Value key={i} $right={data.columns[i].right}>
                {v}
              </Value>
            ))}
          </Row>
        ))}
      </tbody>
    </Table>
    <Spacer $min="48px" />
    <FooterBand $width={data.width} />
  </>
);

const App = () => {
  return (
    <Window>
      <GlobalStyle />
      <Defs />
      <TitleBar>
        <Logo />
        <h1>Name of your organization - USU software - USU.kz - [Production]</h1>
        <WindowButton $narrow aria-label="Réduire">
          <Minimize />
        </WindowButton>
        <WindowButton $narrow aria-label="Agrandir">
          <Maximize />
        </WindowButton>
        <WindowButton $narrow aria-label="Fermer">
          <Close />
        </WindowButton>
      </TitleBar>

      <MenuBar>
        <Grip />
        <Book w={16} />
        {menus.map((m, i) => (
          <MenuItem key={m} $active={i === 0}>
            {m}
          </MenuItem>
        ))}
        <Spacer />
        <WindowButton aria-label="Réduire">
          <Minimize />
        </WindowButton>
        <WindowButton aria-label="Restaurer">
          <Restore />
        </WindowButton>
        <WindowButton aria-label="Fermer">
          <Close />
        </WindowButton>
        <OverflowButton />
      </MenuBar>

      <ToolBar>
        <Grip />
        <ToolGroup>
          <Tools items={leftTools} />
          <SplitButton aria-label="Image">
            <Picture />
            <Caret />
          </SplitButton>
          <Separator />
          <ToolButton aria-label="Grouper">
            <TreeList />
          </ToolButton>
        </ToolGroup>
        <Spacer />
        <OverflowButton />
        <ToolGroup $lead>
          <Grip />
        </ToolGroup>
        <ToolGroup>
          <Tools items={rightTools} />
        </ToolGroup>
        <OverflowButton />
      </ToolBar>

      <Main>
        <SideColumn>
          <SidePanel $grow>
            <SideHeader>
              <SmallFolder />
              <h2>Menu utilisateur</h2>
              <WindowButton aria-label="Restaurer">
                <Restore />
              </WindowButton>
              <WindowButton aria-label="Épingler">
                <Pin />
              </WindowButton>
            </SideHeader>
            <TreeView />
            <Spacer />
            <SearchButton aria-label="Rechercher">
              <SearchIcon />
            </SearchButton>
          </SidePanel>
          <SidePanel>
            <SideHeader>
              <UserIcon />
              <h2>Soutien technique</h2>
              <WindowButton aria-label="Agrandir">
                <Maximize />
              </WindowButton>
              <WindowButton aria-label="Épingler">
                <Pin />
              </WindowButton>
            </SideHeader>
          </SidePanel>
        </SideColumn>

        <Content>
          <ContentBar>
            <Grip />
            <LabelButton>
              <ReportIcon />
              Rapports
              <Caret />
            </LabelButton>
            <LabelButton>
              <GoIcon />
              Actions
              <Caret />
            </LabelButton>
            <Separator />
            <ToolButton aria-label="Horloge">
              <ClockIcon />
            </ToolButton>
            <Spacer />
            <OverflowButton />
          </ContentBar>

          <GridPanel>
            <DataGrid data={orders} />
          </GridPanel>
          <Splitter>
            <span />
          </Splitter>
          <Tabs role="tablist">
            <Tab role="tab" aria-selected="true" $active>
              <Book w={16} />
              Des produits
            </Tab>
            <Tab role="tab" aria-selected="false">
              <Book w={16} />
              Matières premières émises
            </Tab>
          </Tabs>
          <TabPage>
            <GridPanel $grow>
              <DataGrid data={products} />
            </GridPanel>
          </TabPage>
        </Content>
      </Main>

      <DocumentStrip>
        <DocumentTab>
          <Book />
          <button className="name">Production</button>
          <button aria-label="Fermer Production">
            <Close />
          </button>
        </DocumentTab>
      </DocumentStrip>

      <StatusBar>
        <StatusItem $first>
          <span className="icon">
            <StatusInfo />
          </span>
          7.2.9048.10 Professional
        </StatusItem>
        <StatusItem>
          <span className="icon">
            <Database />
          </span>
          localhost (utf8)
        </StatusItem>
        <StatusItem>
          <span className="icon">
            <UserIcon />
          </span>
          NIKOLAY (MAIN)
        </StatusItem>
        <StatusItem>
          <span className="icon">
            <Calendar />
          </span>
          12.09.2024
        </StatusItem>
        <StatusItem $plain>00:00:00:124</StatusItem>
        <StatusItem $plain />
        <SizeGrip>
          <Icon size={15} box={15}>
            <path d="M12 1h2v2h-2zM12 6h2v2h-2zM12 11h2v2h-2zM7 6h2v2H7zM7 11h2v2H7zM2 11h2v2H2z" fill="#777" />
          </Icon>
        </SizeGrip>
      </StatusBar>
    </Window>
  );
};

export default App;
